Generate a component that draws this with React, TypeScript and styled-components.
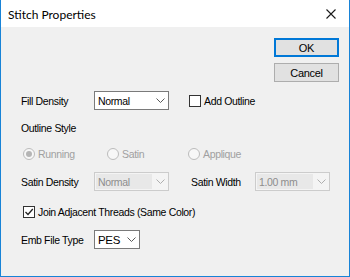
import React from "react";
import styled, { createGlobalStyle } from "styled-components";

const GlobalStyle = createGlobalStyle`
    html, body {
        margin: 0;
        padding: 0;
        background: #ffffff;
    }
    body {
        font-family: "Liberation Sans", Arial, sans-serif;
        font-size: 10.5px;
        letter-spacing: -0.35px;
        color: #000;
    }
`;

const Chevron = () => (
    <svg width="9" height="5" viewBox="0 0 9 5">
        <path d="M0.5 0.5 L4.5 4.5 L8.5 0.5" fill="none" stroke="#5a5a5a" strokeWidth="1" />
    </svg>
);

const CloseIcon = () => (
    <svg width="10" height="10" viewBox="0 0 10 10">
        <path d="M0.5 0.5 L9.5 9.5 M9.5 0.5 L0.5 9.5" stroke="#1a1a1a" strokeWidth="1.1" />
    </svg>
);

const CheckMark = () => (
    <svg width="10" height="10" viewBox="0 0 10 10">
        <path d="M1.5 5 L4 7.5 L8.8 2" fill="none" stroke="#222" strokeWidth="1.3" />
    </svg>
);

const Combo = (
    { value, width, disabled, big }: { value: string, width: number, disabled?: boolean, big?: boolean }
) => (
    <ComboBox $width={width} $disabled={disabled}>
        <ComboText $disabled={disabled} $big={big}>{value}</ComboText>
        <ComboArrow $disabled={disabled}>
            <Chevron />
        </ComboArrow>
    </ComboBox>
);

const Radio = ({ label, checked, width }: { label: string, checked?: boolean, width: number }) => (
    <RadioItem $width={width}>
        <RadioCircle>{checked && <RadioDot />}</RadioCircle>
        <DisabledText>{label}</DisabledText>
    </RadioItem>
);

export default () => {
    return (
        <>
            <GlobalStyle />
            <Window>
                <TitleBar>
                    <Title>Stitch Properties</Title>
                    <CloseButton>
                        <CloseIcon />
                    </CloseButton>
                </TitleBar>
                <Body>
                    <ButtonStack>
                        <DialogButton $default>OK</DialogButton>
                        <DialogButton>Cancel</DialogButton>
                    </ButtonStack>

                    <FormRow $top={9} $height={19}>
                        <Label $width={73}>Fill Density</Label>
                        <Combo value="Normal" width={75} />
                        <CheckLabel $left={20}>
                            <CheckBox />
                            Add Outline
                        </CheckLabel>
                    </FormRow>

                    <FormRow $top={10} $height={16}>
                        <Label $width={100}>Outline Style</Label>
                    </FormRow>

                    <FormRow $top={10} $height={16}>
                        <RadioGroup>
                            <Radio label="Running" checked width={84} />
                            <Radio label="Satin" width={81} />
                            <Radio label="Applique" width={90} />
                        </RadioGroup>
                    </FormRow>

                    <FormRow $top={10} $height={19}>
                        <Label $width={73}>Satin Density</Label>
                        <Combo value="Normal" width={75} disabled />
                        <Label $width={64} $left={22}>Satin Width</Label>
                        <Combo value="1.00 mm" width={75} disabled />
                    </FormRow>

                    <FormRow $top={14} $height={14}>
                        <CheckLabel $left={3}>
                            <CheckBox>
                                <CheckMark />
                            </CheckBox>
                            Join Adjacent Threads (Same Color)
                        </CheckLabel>
                    </FormRow>

                    <FormRow $top={11} $height={19}>
                        <Label $width={73}>Emb File Type</Label>
                        <Combo value="PES" width={46} big />
                    </FormRow>
                </Body>
            </Window>
        </>
    );
};

const Window = styled.div`
    width: 350px;
    height: 277px;
    box-sizing: border-box;
    display: flex;
    flex-direction: column;
    border: 1px solid #1883d7;
    border-top: none;
    background: #f0f0f0;
    overflow: hidden;
`;

const TitleBar = styled.div`
    height: 27px;
    flex-shrink: 0;
    display: flex;
    align-items: center;
    justify-content: space-between;
    background: #ffffff;
    padding: 0 7px 0 7px;
`;

const Title = styled.span`
    font-family: Lato, "Noto Sans", sans-serif;
    font-size: 12px;
    letter-spacing: 0;
    color: #000;
    margin-top: 1px;
`;

const CloseButton = styled.div`
    width: 20px;
    height: 20px;
    display: flex;
    align-items: center;
    justify-content: center;
    margin-right: 1px;
`;

const Body = styled.div`
    flex: 1;
    display: flex;
    flex-direction: column;
    padding: 0 10px 0 19px;
`;

const ButtonStack = styled.div`
    align-self: flex-end;
    display: flex;
    flex-direction: column;
    gap: 6px;
    margin-top: 11px;
`;

const DialogButton = styled.div<{ $default?: boolean }>`
    width: 65px;
    height: 19px;
    box-sizing: border-box;
    display: flex;
    align-items: center;
    justify-content: center;
    background: #e1e1e1;
    border: 1px solid ${p => (p.$default ? "#0078d7" : "#adadad")};
    box-shadow: ${p => (p.$default ? "inset 0 0 0 1px #0078d7" : "none")};
    font-size: 11px;
    letter-spacing: -0.3px;
    color: #000;
`;

const FormRow = styled.div<{ $top: number, $height: number }>`
    display: flex;
    align-items: center;
    margin-top: ${p => p.$top}px;
    height: ${p => p.$height}px;
`;

const Label = styled.span<{ $width: number, $left?: number }>`
    width: ${p => p.$width}px;
    margin-left: ${p => p.$left || 1}px;
    flex-shrink: 0;
    white-space: nowrap;
`;

const ComboBox = styled.div<{ $width: number, $disabled?: boolean }>`
    width: ${p => p.$width}px;
    height: 19px;
    box-sizing: border-box;
    display: flex;
    flex-shrink: 0;
    border: 1px solid ${p => (p.$disabled ? "#cccccc" : "#7a7a7a")};
    background: ${p => (p.$disabled ? "#f4f4f4" : "#ffffff")};
`;

const ComboText = styled.div<{ $disabled?: boolean, $big?: boolean }>`
    flex: 1;
    display: flex;
    align-items: center;
    padding-left: 2px;
    margin: 1px 0 1px 1px;
    background: ${p => (p.$disabled ? "#e8e8e8" : "transparent")};
    color: ${p => (p.$disabled ? "#8d8d8d" : "#000")};
    font-size: ${p => (p.$big ? "11.5px" : "10.5px")};
`;

const ComboArrow = styled.div<{ $disabled?: boolean }>`
    width: 16px;
    display: flex;
    align-items: center;
    justify-content: center;
    opacity: ${p => (p.$disabled ? 0.45 : 1)};
`;

const CheckLabel = styled.div<{ $left: number }>`
    display: flex;
    align-items: center;
    gap: 3px;
    margin-left: ${p => p.$left}px;
    white-space: nowrap;
`;

const CheckBox = styled.div`
    width: 12px;
    height: 12px;
    box-sizing: border-box;
    border: 1px solid #333333;
    background: #ffffff;
    display: flex;
    align-items: center;
    justify-content: center;
`;

const RadioGroup = styled.div`
    display: flex;
    margin-left: 3px;
`;

const RadioItem = styled.div<{ $width: number }>`
    width: ${p => p.$width}px;
    display: flex;
    align-items: center;
    gap: 3px;
`;

const RadioCircle = styled.div`
    width: 12px;
    height: 12px;
    box-sizing: border-box;
    border-radius: 50%;
    border: 1px solid #bcbcbc;
    background: #f7f7f7;
    display: flex;
    align-items: center;
    justify-content: center;
`;

const RadioDot = styled.div`
    width: 6px;
    height: 6px;
    border-radius: 50%;
    background: #b5b5b5;
`;

const DisabledText = styled.span`
    color: #a0a0a0;
`;
